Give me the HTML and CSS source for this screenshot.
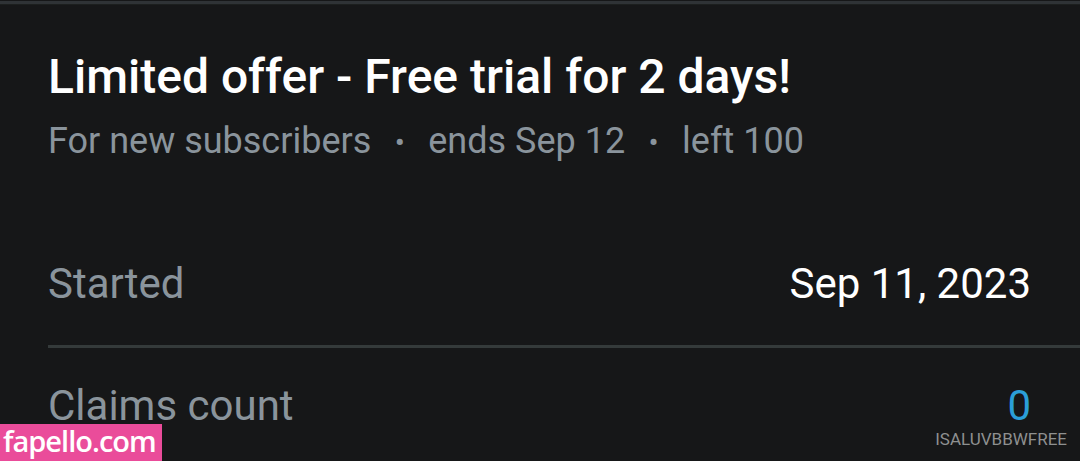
FILE: index.html
```html
<!DOCTYPE html>
<html>
<head>
<meta charset="utf-8">
<link rel="stylesheet" href="styles.css">
</head>
<body>
<div class="topbar"></div>
<div class="card">
  <h1 class="title">Limited offer - Free trial for 2 days!</h1>
  <div class="meta">
    <span>For new subscribers</span>
    <span class="dot">•</span>
    <span>ends Sep 12</span>
    <span class="dot">•</span>
    <span>left 100</span>
  </div>
  <div class="rows">
    <div class="row">
      <span class="label">Started</span>
      <span class="value">Sep 11, 2023</span>
    </div>
    <div class="row">
      <span class="label">Claims count</span>
      <span class="value blue">0</span>
    </div>
  </div>
</div>
<div class="wm-left">fapello.com</div>
<div class="wm-right">ISALUVBBWFREE</div>
</body>
</html>
```

FILE: styles.css
```css
html, body {
  margin: 0;
  padding: 0;
  background: #161718;
  width: 1080px;
  height: 461px;
  overflow: hidden;
  font-family: Roboto, "Noto Sans", sans-serif;
}
.topbar {
  height: 3px;
  margin-top: 1px;
  background: #2f3336;
  border-bottom: 1px solid #1c1f1e;
}
.card {
  padding: 0 0 0 48px;
}
.title {
  margin: 0;
  padding-top: 44px;
  font-size: 48px;
  font-weight: 500;
  line-height: 56px;
  color: #ffffff;
}
.meta {
  display: flex;
  align-items: baseline;
  margin-top: 14px;
  font-size: 36px;
  line-height: 44px;
  color: #8a949c;
}
.dot {
  width: 57px;
  text-align: center;
  font-size: 30px;
}
.rows {
  margin-top: 89px;
}
.row {
  display: flex;
  justify-content: space-between;
  align-items: baseline;
  padding-right: 49px;
  font-size: 42px;
  line-height: 60px;
  height: 94px;
  box-sizing: border-box;
  border-bottom: 3px solid #343a3a;
}
.row + .row {
  padding-top: 39px;
  line-height: 38px;
  height: auto;
  border-bottom: none;
}
.label {
  color: #8a949c;
}
.value {
  color: #ffffff;
}
.blue {
  color: #2b9fd8;
}
.wm-left {
  position: absolute;
  left: 0;
  top: 424px;
  width: 162px;
  height: 37px;
  background: #ea4c9a;
  color: #fff;
  font-family: "Open Sans", sans-serif;
  font-weight: 600;
  font-size: 29px;
  letter-spacing: -1px;
  line-height: 34px;
  padding-left: 3px;
  box-sizing: border-box;
  white-space: nowrap;
}
.wm-right {
  position: absolute;
  right: 13px;
  top: 430px;
  color: #8e9090;
  font-size: 17px;
  line-height: 18px;
}
```
